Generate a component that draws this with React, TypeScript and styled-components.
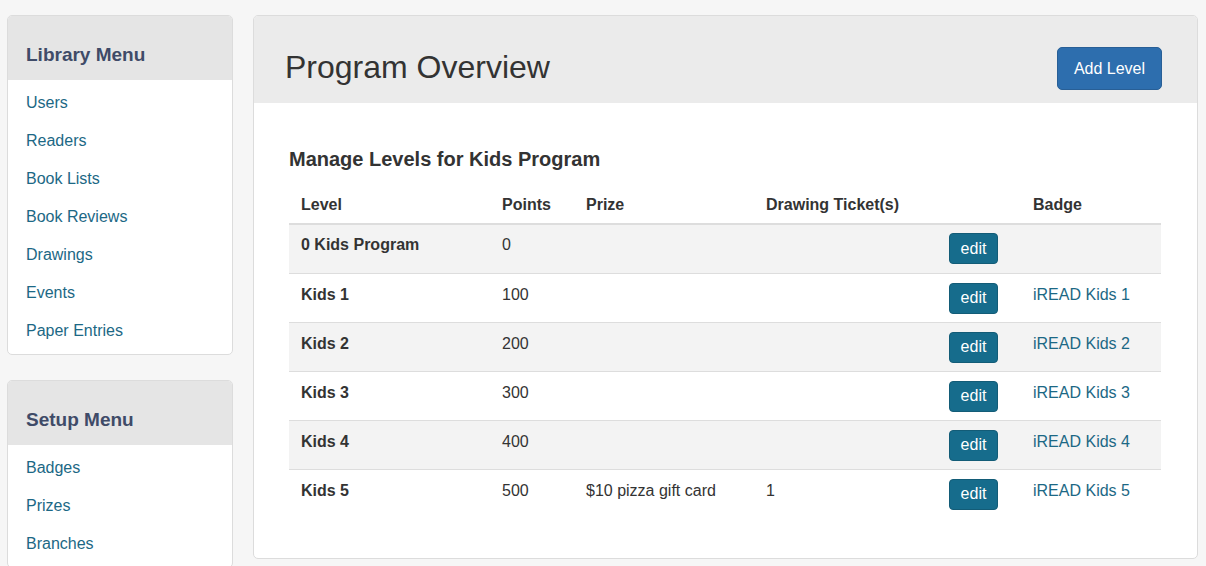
import { createGlobalStyle, styled } from "styled-components"

const GlobalStyle = createGlobalStyle`
    * { box-sizing: border-box; }
    body {
        margin: 0;
        background: #f6f6f6;
        font-family: "Liberation Sans", Arial, sans-serif;
        font-size: 16px;
        color: #333;
    }
`

const Page = styled.div`
    display: flex;
    align-items: flex-start;
    gap: 20px;
    padding: 15px 8px 0 7px;
    height: 566px;
    overflow: hidden;
`

const Sidebar = styled.div`
    width: 226px;
    flex: none;
    display: flex;
    flex-direction: column;
    gap: 25px;
`

const Panel = styled.div`
    background: #fff;
    border: 1px solid #dcdcdc;
    border-radius: 5px;
    overflow: hidden;
`

const MenuHeader = styled.div`
    background: #e5e5e5;
    height: 64px;
    padding: 29px 18px 0;
    font-size: 19px;
    line-height: 20px;
    font-weight: 700;
    color: #3f4b68;
`

const MenuList = styled.ul`
    list-style: none;
    margin: 0;
    padding: 4px 0;
`

const MenuItem = styled.li`
    height: 38px;
    line-height: 38px;
    padding: 0 18px;

    a {
        color: #1c6885;
        text-decoration: none;
    }
`

const Main = styled(Panel)`
    flex: 1;
    height: 544px;
`

const MainHeader = styled.div`
    background: #ebebeb;
    height: 87px;
    padding: 16px 35px 0 31px;
    display: flex;
    align-items: center;
    justify-content: space-between;

    h1 {
        margin: 0;
        font-size: 32px;
        font-weight: 400;
        color: #333;
    }
`

const PrimaryButton = styled.button`
    width: 105px;
    height: 43px;
    margin-top: 2px;
    background: #2d6eae;
    border: 1px solid #285f96;
    border-radius: 5px;
    color: #fff;
    font-family: inherit;
    font-size: 16px;
`

const MainBody = styled.div`
    padding: 45px 36px 40px 35px;

    h3 {
        margin: 0 0 15px;
        font-size: 20px;
        line-height: 22px;
        font-weight: 700;
        color: #333;
    }
`

const Table = styled.table`
    width: 100%;
    border-collapse: collapse;
    table-layout: fixed;

    th, td {
        text-align: left;
        vertical-align: top;
        padding: 9px 12px 7px;
        line-height: 24px;
    }

    th {
        font-weight: 700;
        padding: 8px 12px 6px;
        border-bottom: 2px solid #dddddd;
    }

    td {
        border-top: 1px solid #dddddd;
        height: 49px;
    }

    tbody tr:first-child td { border-top: none; padding-top: 8px; }
    tbody tr:nth-child(odd) { background: #f3f3f3; }
`

const LevelCell = styled.td`
    font-weight: 700;
`

const EditButton = styled.button`
    width: 49px;
    height: 31px;
    background: #166c8c;
    border: 1px solid #135c77;
    border-radius: 4px;
    color: #fff;
    font-family: inherit;
    font-size: 16px;
    padding: 0;
`

const BadgeLink = styled.a`
    color: #1c6885;
    text-decoration: none;
`

const libraryMenu = ["Users", "Readers", "Book Lists", "Book Reviews", "Drawings", "Events", "Paper Entries"]
const setupMenu = ["Badges", "Prizes", "Branches"]

const levels = [
    { name: "0 Kids Program", points: 0, prize: "", tickets: "", badge: "" },
    { name: "Kids 1", points: 100, prize: "", tickets: "", badge: "iREAD Kids 1" },
    { name: "Kids 2", points: 200, prize: "", tickets: "", badge: "iREAD Kids 2" },
    { name: "Kids 3", points: 300, prize: "", tickets: "", badge: "iREAD Kids 3" },
    { name: "Kids 4", points: 400, prize: "", tickets: "", badge: "iREAD Kids 4" },
    { name: "Kids 5", points: 500, prize: "$10 pizza gift card", tickets: "1", badge: "iREAD Kids 5" },
]

function Menu({ title, items }: { title: string; items: string[] }) {
    return (
        <Panel>
            <MenuHeader>{title}</MenuHeader>
            <MenuList>
                {items.map((item) => (
                    <MenuItem key={item}><a href="#">{item}</a></MenuItem>
                ))}
            </MenuList>
        </Panel>
    )
}

export default function App() {
    return (
        <>
            <GlobalStyle />
            <Page>
                <Sidebar>
                    <Menu title="Library Menu" items={libraryMenu} />
                    <Menu title="Setup Menu" items={setupMenu} />
                </Sidebar>
                <Main>
                    <MainHeader>
                        <h1>Program Overview</h1>
                        <PrimaryButton>Add Level</PrimaryButton>
                    </MainHeader>
                    <MainBody>
                        <h3>Manage Levels for Kids Program</h3>
                        <Table>
                            <colgroup>
                                <col style={{ width: 201 }} />
                                <col style={{ width: 84 }} />
                                <col style={{ width: 180 }} />
                                <col style={{ width: 183 }} />
                                <col style={{ width: 84 }} />
                                <col />
                            </colgroup>
                            <thead>
                                <tr>
                                    <th>Level</th>
                                    <th>Points</th>
                                    <th>Prize</th>
                                    <th>Drawing Ticket(s)</th>
                                    <th></th>
                                    <th>Badge</th>
                                </tr>
                            </thead>
                            <tbody>
                                {levels.map((lvl) => (
                                    <tr key={lvl.name}>
                                        <LevelCell>{lvl.name}</LevelCell>
                                        <td>{lvl.points}</td>
                                        <td>{lvl.prize}</td>
                                        <td>{lvl.tickets}</td>
                                        <td><EditButton>edit</EditButton></td>
                                        <td>{lvl.badge && <BadgeLink href="#">{lvl.badge}</BadgeLink>}</td>
                                    </tr>
                                ))}
                            </tbody>
                        </Table>
                    </MainBody>
                </Main>
            </Page>
        </>
    )
}
